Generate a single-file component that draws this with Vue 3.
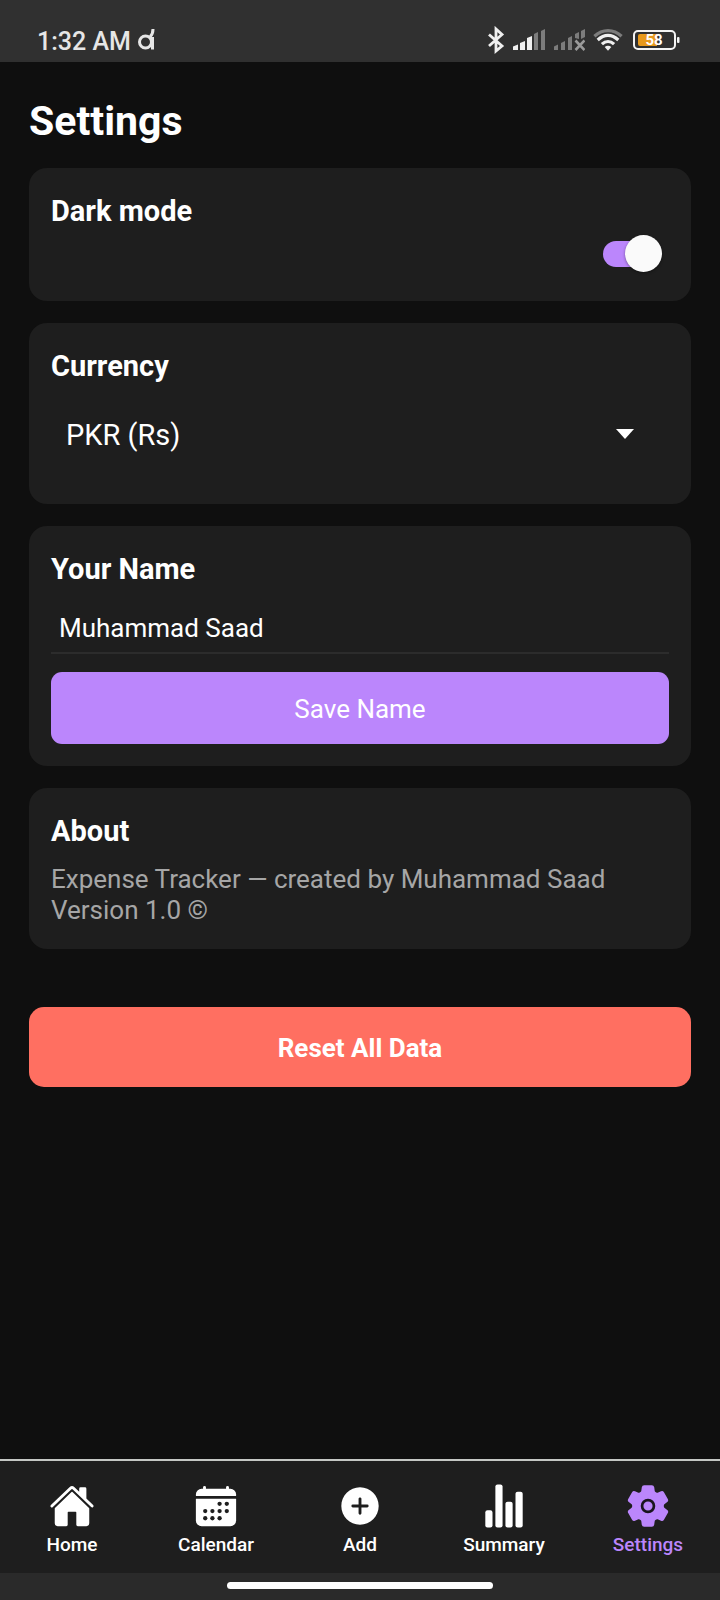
<script setup>
import { ref } from 'vue'

const darkMode = ref(true)
const currency = ref('PKR')
const name = ref('Muhammad Saad')
const currencies = [
  { code: 'PKR', label: 'PKR (Rs)' },
  { code: 'USD', label: 'USD ($)' },
  { code: 'EUR', label: 'EUR (€)' },
]

const tabs = [
  {
    label: 'Home',
    paths: [
      'M261.56 101.28a8 8 0 00-11.06 0L66.4 277.15a8 8 0 00-2.47 5.79L63.9 448a32 32 0 0032 32H192a16 16 0 0016-16V328a8 8 0 018-8h80a8 8 0 018 8v136a16 16 0 0016 16h96.06a32 32 0 0032-32V282.94a8 8 0 00-2.47-5.79z',
      'M490.91 244.15l-74.8-71.56V64a16 16 0 00-16-16h-48a16 16 0 00-16 16v32l-57.92-55.38C272.77 35.14 264.71 32 256 32c-8.68 0-16.72 3.14-22.14 8.63l-212.7 203.5c-6.22 6-7 15.87-1.34 22.37A16 16 0 0043 267.56L250.5 69.28a8 8 0 0111.06 0l207.52 198.28a16 16 0 0022.59-.44c6.14-6.36 5.63-16.86-.76-22.97z',
    ],
  },
  {
    label: 'Calendar',
    paths: [
      'M480 128a64 64 0 00-64-64h-16V48a16 16 0 00-32 0v16H144V48a16 16 0 00-32 0v16H96a64 64 0 00-64 64v12a4 4 0 004 4h440a4 4 0 004-4z',
      'M32 416a64 64 0 0064 64h320a64 64 0 0064-64V179a3 3 0 00-3-3H35a3 3 0 00-3 3z',
    ],
    dots: [[296, 232], [376, 232], [136, 312], [216, 312], [296, 312], [376, 312], [136, 392], [216, 392], [296, 392]],
  },
  {
    label: 'Add',
    paths: [
      'M256 48C141.31 48 48 141.31 48 256s93.31 208 208 208 208-93.31 208-208S370.69 48 256 48zm80 224h-64v64a16 16 0 01-32 0v-64h-64a16 16 0 010-32h64v-64a16 16 0 0132 0v64h64a16 16 0 010 32z',
    ],
  },
  {
    label: 'Summary',
    paths: [
      'M104 496H72a24 24 0 01-24-24V328a24 24 0 0124-24h32a24 24 0 0124 24v144a24 24 0 01-24 24z',
      'M328 496h-32a24 24 0 01-24-24V232a24 24 0 0124-24h32a24 24 0 0124 24v240a24 24 0 01-24 24z',
      'M440 496h-32a24 24 0 01-24-24V120a24 24 0 0124-24h32a24 24 0 0124 24v352a24 24 0 01-24 24z',
      'M216 496h-32a24 24 0 01-24-24V40a24 24 0 0124-24h32a24 24 0 0124 24v432a24 24 0 01-24 24z',
    ],
  },
  {
    label: 'Settings',
    active: true,
    paths: [
      'M470.39 300l-.47-.38-31.56-24.75a16.11 16.11 0 01-6.1-13.33v-11.56a16 16 0 016.11-13.22L469.92 212l.47-.38a26.68 26.68 0 005.9-34.06l-42.71-73.9a1.59 1.59 0 01-.13-.22A26.86 26.86 0 00401 92.14l-.35.13-37.1 14.93a15.94 15.94 0 01-14.47-1.29q-4.92-3.1-10-5.86a15.94 15.94 0 01-8.19-11.82l-5.59-39.59-.12-.72A27.22 27.22 0 00298.76 26h-85.52a26.92 26.92 0 00-26.45 22.39l-.09.56-5.57 39.67a16 16 0 01-8.13 11.82 175.21 175.21 0 00-10 5.82 15.92 15.92 0 01-14.43 1.27l-37.13-15-.35-.14a26.87 26.87 0 00-32.48 11.34l-.13.22-42.77 73.95a26.71 26.71 0 005.9 34.1l.47.38 31.56 24.75a16.11 16.11 0 016.1 13.33v11.56a16 16 0 01-6.11 13.22L42.08 300l-.47.38a26.68 26.68 0 00-5.9 34.06l42.71 73.9a1.59 1.59 0 01.13.22 26.86 26.86 0 0032.45 11.3l.35-.13 37.07-14.93a15.94 15.94 0 0114.47 1.29q4.92 3.1 10 5.86a15.94 15.94 0 018.19 11.82l5.56 39.59.12.72A27.22 27.22 0 00213.24 486h85.52a26.92 26.92 0 0026.45-22.39l.09-.56 5.57-39.67a16 16 0 018.18-11.82c3.42-1.84 6.76-3.79 10-5.82a15.92 15.92 0 0114.43-1.27l37.13 14.95.35.14a26.85 26.85 0 0032.48-11.34 2.53 2.53 0 01.13-.22l42.71-73.89a26.7 26.7 0 00-5.89-34.11z',
    ],
    ring: true,
  },
]
</script>

<template>
  <div class="screen">
    <header class="status">
      <span class="clock">1:32 AM</span>
      <svg class="brand" width="17" height="22" viewBox="0 0 17 22" fill="none" stroke="#e6e6e6" stroke-width="3">
        <circle cx="7.500" cy="13" r="6" />
        <path d="M14.500 8V20.500M15 0c0 4-1 6-3 8" />
      </svg>
      <div class="indicators">
        <svg width="18" height="28" viewBox="0 0 18 28" fill="none" stroke="#efefef" stroke-width="2.800">
          <path d="M2 8.500L15 20L9 25V3L15 8.500L2 20" />
        </svg>
        <svg width="33" height="24" viewBox="0 0 33 24">
          <path fill="#efefef" d="M0 18.500l5-2V22H0zM7 15l5-2v9H7zM14 10l5-2v14h-5z" />
          <path fill="#7c7c7c" d="M21 6l4-2v18h-4zM28 3l4-2v21h-4z" />
        </svg>
        <svg width="31" height="24" viewBox="0 0 31 24">
          <path fill="#7c7c7c" d="M0 18.500l4-2V22H0zM7 15l4-2v9H7zM14 10l4-2v14h-4zM21 6l4-2v7l-4-1zM27 3l4-2v8l-4 2z" />
          <path fill="none" stroke="#9a9a9a" stroke-width="2.600" d="M21.500 12.500l9 9.500M30.500 12.500l-9 9.500" />
        </svg>
        <svg class="wifi" width="30" height="24" viewBox="0 0 32 24" fill="none" stroke-width="3.400">
          <path stroke="#7c7c7c" d="M1.500 8C10 0 22 0 30.500 8" />
          <path stroke="#efefef" d="M5 12C12 5.500 20 5.500 27 12M9.500 16.500c4-3.800 9-3.800 13 0" />
          <path fill="#efefef" d="M16 23.500l-3.500-4c2-1.800 5-1.800 7 0z" />
        </svg>
        <svg width="47" height="22" viewBox="0 0 47 22">
          <rect x="1" y="2" width="41" height="18" rx="4" fill="none" stroke="#f4f4f4" stroke-width="2" />
          <rect x="44" y="8" width="2.500" height="6" rx="1" fill="#f4f4f4" />
          <path fill="#e8991c" d="M7 5h17v12H7a2 2 0 01-2-2V7a2 2 0 012-2z" />
          <text class="charge" x="21" y="16" text-anchor="middle">58</text>
        </svg>
      </div>
    </header>

    <main class="content">
      <h1 class="title">Settings</h1>

      <section class="card">
        <label class="heading" for="dark">Dark mode</label>
        <div class="switch-row">
          <input id="dark" v-model="darkMode" class="switch" type="checkbox" role="switch" />
        </div>
      </section>

      <section class="card">
        <label class="heading" for="currency">Currency</label>
        <div class="picker">
          <select id="currency" v-model="currency" class="select">
            <option v-for="c in currencies" :key="c.code" :value="c.code">{{ c.label }}</option>
          </select>
          <svg class="caret" width="18" height="10" viewBox="0 0 18 10"><path fill="#fff" d="M0 0h18L9 10z" /></svg>
        </div>
      </section>

      <section class="card">
        <label class="heading" for="name">Your Name</label>
        <input id="name" v-model="name" class="field" type="text" />
        <button class="save" type="button">Save Name</button>
      </section>

      <section class="card">
        <h2 class="heading">About</h2>
        <p class="about">Expense Tracker — created by Muhammad Saad<br />Version 1.0 ©</p>
      </section>

      <button class="reset" type="button">Reset All Data</button>
    </main>

    <nav class="tabs">
      <a v-for="tab in tabs" :key="tab.label" href="#" class="tab" :class="{ active: tab.active }">
        <svg width="46" height="46" viewBox="0 0 512 512" fill="currentColor" aria-hidden="true">
          <path v-for="(d, i) in tab.paths" :key="i" :d="d" />
          <circle v-for="(p, i) in tab.dots" :key="'dot' + i" class="hole" :cx="p[0]" :cy="p[1]" r="24" />
          <circle v-if="tab.ring" class="ring" cx="256" cy="256" r="66" />
        </svg>
        <span>{{ tab.label }}</span>
      </a>
    </nav>
    <div class="gesture"><div class="pill"></div></div>
  </div>
</template>

<style>
body {
  background: #0f0f0f;
}
</style>

<style scoped>
.screen {
  display: flex;
  flex-direction: column;
  min-height: 100vh;
  background: #0f0f0f;
  color: #fff;
  font-family: Roboto, "Liberation Sans", sans-serif;
}
.screen * {
  box-sizing: border-box;
}
svg {
  display: block;
}
.status {
  display: flex;
  align-items: center;
  height: 62px;
  padding: 22px 40px 0 37px;
  background: #303030;
}
.clock {
  color: #e6e6e6;
  font-size: 25px;
  line-height: 30px;
  font-weight: 500;
}
.brand {
  margin: 0 0 4px 7px;
}
.indicators {
  display: flex;
  align-items: center;
  gap: 8px;
  margin-left: auto;
  padding-bottom: 4px;
}
.wifi {
  margin-right: 2px;
}
.charge {
  fill: #fff;
  font-size: 15px;
  font-weight: 700;
}
.content {
  flex: 1;
  display: flex;
  flex-direction: column;
  gap: 22px;
  padding: 35px 29px 40px;
}
.title {
  margin: 0 0 1px;
  font-size: 41px;
  line-height: 48px;
  font-weight: 700;
}
.card {
  display: flex;
  flex-direction: column;
  padding: 22px;
  border-radius: 18px;
  background: #1e1e1e;
}
.heading {
  margin: 0;
  font-size: 29px;
  line-height: 42px;
  font-weight: 700;
}
.switch-row {
  display: flex;
  justify-content: flex-end;
  padding: 3px 7px 7px;
}
.switch {
  appearance: none;
  display: flex;
  align-items: center;
  width: 59px;
  height: 37px;
  margin: 0;
  border-radius: 19px;
}
.switch::before {
  content: "";
  width: 57px;
  height: 26px;
  flex: none;
  border-radius: 13px;
  background: #555;
}
.switch::after {
  content: "";
  width: 37px;
  height: 37px;
  flex: none;
  margin-left: -57px;
  border-radius: 50%;
  background: #fafafa;
  box-shadow: 0 1px 3px rgba(0, 0, 0, 0.4);
}
.switch:checked::before {
  background: #bb86fc;
}
.switch:checked::after {
  margin-left: -35px;
}
.picker {
  display: grid;
  align-items: center;
}
.select {
  grid-area: 1 / 1;
  appearance: none;
  width: 100%;
  height: 95px;
  padding: 0 60px 0 15px;
  border: 0;
  background: transparent;
  color: #fff;
  font-family: inherit;
  font-size: 29px;
}
.select option {
  background: #1e1e1e;
}
.caret {
  grid-area: 1 / 1;
  justify-self: end;
  margin: 0 35px 2px 0;
  pointer-events: none;
}
.field {
  width: 100%;
  height: 51px;
  margin: 13px 0 18px;
  padding: 0 8px;
  border: 0;
  border-bottom: 2px solid #2c2c2c;
  background: transparent;
  color: #fff;
  font-family: inherit;
  font-size: 26px;
}
.save,
.reset {
  padding: 2px 0 0;
  border: 0;
  color: #fff;
  font-family: inherit;
  font-size: 26px;
}
.save {
  height: 72px;
  border-radius: 11px;
  background: #bb86fc;
}
.about {
  margin: 12px 0 1px;
  color: #a6a6a6;
  font-size: 26px;
  line-height: 31px;
}
.reset {
  height: 80px;
  margin-top: 36px;
  border-radius: 15px;
  background: #ff6f61;
  font-weight: 700;
}
.tabs {
  display: flex;
  border-top: 2px solid #c4c7c4;
  background: #1e1e1e;
}
.tab {
  flex: 1;
  display: flex;
  flex-direction: column;
  align-items: center;
  gap: 5px;
  padding: 22px 0 17px;
  color: #fff;
  font-size: 19px;
  line-height: 22px;
  font-weight: 500;
  text-decoration: none;
}
.tab.active {
  color: #bb86fc;
}
.hole {
  fill: #1e1e1e;
}
.ring {
  fill: none;
  stroke: #1a141f;
  stroke-width: 30;
}
.gesture {
  display: flex;
  justify-content: center;
  padding: 9px 0 11px;
  background: #2a2a2a;
}
.pill {
  width: 37%;
  height: 7px;
  border-radius: 4px;
  background: #fff;
}
</style>
